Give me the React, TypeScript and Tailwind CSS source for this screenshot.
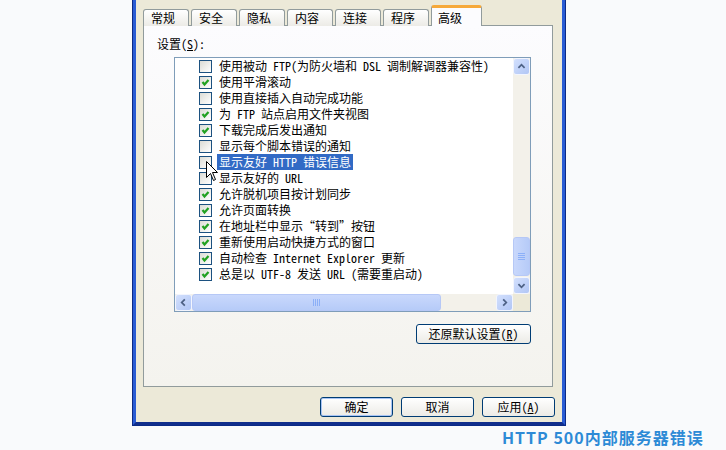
import React from "react";

const ui = "font-['Noto_Sans_Mono_CJK_SC','Noto_Sans_CJK_SC',sans-serif]";

interface Option {
  label: string;
  checked: boolean;
  selected?: boolean;
}

const options: Option[] = [
  { label: "使用被动 FTP(为防火墙和 DSL 调制解调器兼容性)", checked: false },
  { label: "使用平滑滚动", checked: true },
  { label: "使用直接插入自动完成功能", checked: false },
  { label: "为 FTP 站点启用文件夹视图", checked: true },
  { label: "下载完成后发出通知", checked: true },
  { label: "显示每个脚本错误的通知", checked: false },
  { label: "显示友好 HTTP 错误信息", checked: false, selected: true },
  { label: "显示友好的 URL", checked: false },
  { label: "允许脱机项目按计划同步", checked: true },
  { label: "允许页面转换", checked: true },
  { label: "在地址栏中显示“转到”按钮", checked: true },
  { label: "重新使用启动快捷方式的窗口", checked: true },
  { label: "自动检查 Internet Explorer 更新", checked: true },
  { label: "总是以 UTF-8 发送 URL (需要重启动)", checked: true },
];

const tabs = ["常规", "安全", "隐私", "内容", "连接", "程序"];

function CheckBox({ checked }: { checked: boolean }) {
  return (
    <div className="w-[13px] h-[13px] shrink-0 border border-[#1c5180] bg-linear-to-br from-[#dcdcd5] to-white flex items-center justify-center">
      {checked && (
        <svg width="11" height="11" viewBox="0 0 11 11">
          <polyline
            points="2.5,5 4.5,7.5 8.5,3"
            fill="none"
            stroke="#21a121"
            strokeWidth="2.2"
          />
        </svg>
      )}
    </div>
  );
}

function ScrollButton({ dir }: { dir: "up" | "down" | "left" | "right" }) {
  const paths = {
    up: "M5 10 L8.5 6.5 L12 10",
    down: "M5 7 L8.5 10.5 L12 7",
    left: "M10 5 L6.5 8.5 L10 12",
    right: "M7 5 L10.5 8.5 L7 12",
  };
  return (
    <div className="w-[17px] h-[17px] shrink-0 rounded-[3px] border border-[#f2f5fe] bg-linear-to-br from-[#d3e0fd] to-[#b1c6f5] flex items-center justify-center">
      <svg width="17" height="17" viewBox="0 0 17 17">
        <path d={paths[dir]} fill="none" stroke="#4d6185" strokeWidth="2" />
      </svg>
    </div>
  );
}

function Grip({ vertical }: { vertical: boolean }) {
  return (
    <div className={vertical ? "flex flex-col gap-[1px]" : "flex gap-[1px]"}>
      {[0, 1, 2, 3].map((i) => (
        <div
          key={i}
          className={
            vertical
              ? "w-[7px] h-[1px] bg-[#eef3fe] border-b border-[#8cb0f8]"
              : "h-[7px] w-[1px] bg-[#eef3fe] border-r border-[#8cb0f8]"
          }
        />
      ))}
    </div>
  );
}

function XpButton({
  children,
  width,
  isDefault,
}: {
  children: React.ReactNode;
  width: string;
  isDefault?: boolean;
}) {
  return (
    <div
      className={`${width} h-[20px] rounded-[3px] border border-[#003c74] bg-linear-to-b from-white to-[#ecebe6] flex items-center justify-center text-[12px] text-black ${
        isDefault ? "shadow-[inset_0_0_0_1px_#a8c4f4]" : ""
      }`}
    >
      {children}
    </div>
  );
}

function Cursor() {
  return (
    <svg
      className="absolute left-[206px] top-[161px]"
      width="13"
      height="21"
      viewBox="0 0 13 21"
    >
      <path
        d="M0.5 0.5 L0.5 16.5 L4.5 12.5 L7.5 19.5 L9.5 18.5 L6.5 11.5 L11.5 11.5 Z"
        fill="white"
        stroke="black"
        strokeWidth="1"
      />
    </svg>
  );
}

export default function App() {
  return (
    <div className="relative w-[726px] h-[450px] bg-[#f9fafc] overflow-hidden">
      {/* dialog window */}
      <div className={`ml-[132px] w-[434px] h-[426px] bg-[#0b2a86] px-px pb-px ${ui}`}>
        <div className="h-full border-x-[3px] border-b-[3px] border-x-[#2a5cd4] border-b-[#102e8c] bg-[#ece9d8] flex flex-col">
          {/* tabs */}
          <div className="relative z-10 mt-[5px] h-[21px] -mb-px pl-[7px] flex items-start gap-[2px]">
            {tabs.map((t) => (
              <div
                key={t}
                className="mt-[4px] w-[46px] h-[17px] rounded-t-[3px] border border-b-0 border-[#919b9c] bg-linear-to-b from-white to-[#ecebe6] pl-[7px] text-[12px] leading-[15px] text-black"
              >
                {t}
              </div>
            ))}
            <div className="w-[51px] h-[21px] rounded-t-[3px] border-x border-[#919b9c] border-t-[3px] border-t-[#f6a93a] bg-[#fcfcfe] pl-[6px] pt-[2px] text-[12px] leading-[15px] text-black">
              高级
            </div>
          </div>

          {/* tab page */}
          <div className="ml-[7px] w-[410px] h-[362px] border border-[#919b9c] bg-linear-to-b from-[#fcfcfe] to-[#f4f3ee] flex flex-col">
            <div className="ml-[13px] mt-[10px] text-[12px] leading-[16px] text-black">
              设置(<span className="underline">S</span>):
            </div>

            <div className="ml-[30px] mt-[5px] w-[357px] flex flex-col items-end">
              {/* list box */}
              <div className="w-[357px] h-[255px] border border-[#7f9db9] bg-white flex flex-col">
                <div className="flex h-[236px]">
                  <div className="flex-1 overflow-hidden">
                    {options.map((o) => (
                      <div key={o.label} className="h-[16px] pl-[24px] flex items-center">
                        <CheckBox checked={o.checked} />
                        <span
                          className={`ml-[5px] px-[2px] h-[16px] whitespace-nowrap text-[12px] leading-[16px] ${
                            o.selected ? "bg-[#316ac5] text-white" : "text-black"
                          }`}
                        >
                          {o.label}
                        </span>
                      </div>
                    ))}
                  </div>
                  {/* vertical scrollbar */}
                  <div className="w-[17px] bg-[#f3f1ea] flex flex-col">
                    <ScrollButton dir="up" />
                    <div className="flex-1" />
                    <div className="h-[39px] rounded-[3px] border border-[#b6c8f6] bg-linear-to-r from-[#c9d8fc] to-[#b6cbf8] flex items-center justify-center">
                      <Grip vertical />
                    </div>
                    <div className="h-[1px]" />
                    <ScrollButton dir="down" />
                  </div>
                </div>
                {/* horizontal scrollbar */}
                <div className="h-[17px] flex bg-[#f3f1ea]">
                  <ScrollButton dir="left" />
                  <div className="w-[249px] h-[17px] rounded-[3px] border border-[#b6c8f6] bg-linear-to-b from-[#c9d8fc] to-[#b6cbf8] flex items-center justify-center">
                    <Grip vertical={false} />
                  </div>
                  <div className="flex-1" />
                  <ScrollButton dir="right" />
                  <div className="w-[17px] bg-[#ece9d8]" />
                </div>
              </div>

              <div className="mt-[12px]">
                <XpButton width="w-[115px]">
                  还原默认设置(<span className="underline">R</span>)
                </XpButton>
              </div>
            </div>
          </div>

          {/* dialog buttons */}
          <div className="mt-[10px] pr-[7px] flex justify-end gap-[8px]">
            <XpButton width="w-[73px]" isDefault>
              确定
            </XpButton>
            <XpButton width="w-[73px]">取消</XpButton>
            <XpButton width="w-[73px]">
              应用(<span className="underline">A</span>)
            </XpButton>
          </div>
        </div>
      </div>

      <div className="mt-[1px] pl-[502px] text-[16px] leading-[20px] font-bold tracking-[1px] text-[#2d8ad6] font-['Noto_Sans_CJK_SC',sans-serif]">
        HTTP 500内部服务器错误
      </div>

      <Cursor />
    </div>
  );
}
